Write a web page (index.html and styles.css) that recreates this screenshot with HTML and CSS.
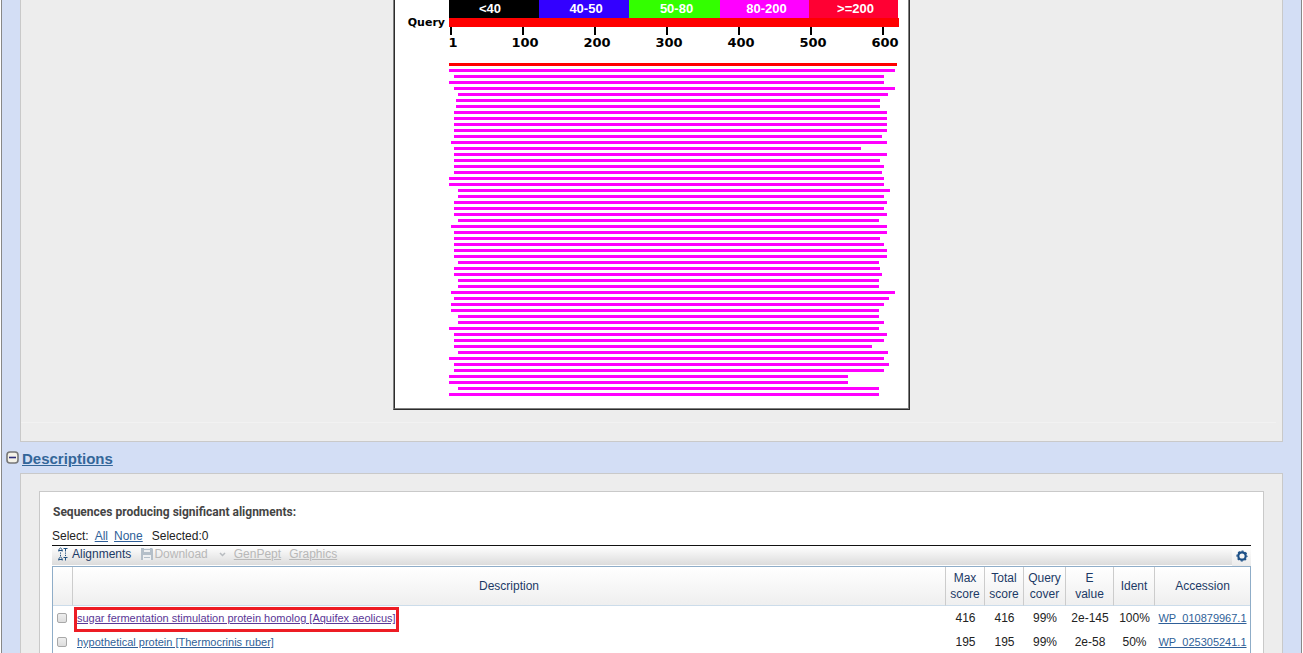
FILE: index.html
```
<!DOCTYPE html>
<html lang="en">
<head>
<meta charset="utf-8">
<title>BLAST results</title>
<link rel="stylesheet" href="styles.css">
</head>
<body>
<main class="page">
  <section class="panel graphic-panel">
    <div class="overview">
      <div class="legend">
        <span class="score black">&lt;40</span>
        <span class="score blue">40-50</span>
        <span class="score green">50-80</span>
        <span class="score pink">80-200</span>
        <span class="score red">&gt;=200</span>
      </div>
      <div class="query-label">Query</div>
      <div class="query-bar"></div>
      <div class="scale">
        <span>1</span><span>100</span><span>200</span><span>300</span><span>400</span><span>500</span><span>600</span>
      </div>
      <svg class="hits" width="450" height="333" viewBox="0 0 450 333" role="img" aria-label="Alignment hits">
        <path fill="#f00" d="M0 0H448v3H0z"/>
        <path fill="#f0f" d="M0 6H446v3H0zM5 12H435v3H5zM0 18H435v3H0zM5 24H446v3H5zM9 30H439v3H9zM7 36H431v3H7zM7 42H431v3H7zM5 48H438v3H5zM5 54H438v3H5zM5 60H438v3H5zM5 66H438v3H5zM5 72H433v3H5zM2 78H438v3H2zM5 84H412v3H5zM5 90H438v3H5zM5 96H431v3H5zM5 102H435v3H5zM5 108H433v3H5zM0 114H435v3H0zM0 120H435v3H0zM9 126H441v3H9zM9 132H435v3H9zM5 138H438v3H5zM5 144H435v3H5zM5 150H438v3H5zM9 156H430v3H9zM2 162H438v3H2zM5 168H438v3H5zM5 174H431v3H5zM5 180H435v3H5zM5 186H438v3H5zM5 192H438v3H5zM9 198H430v3H9zM5 204H431v3H5zM5 210H433v3H5zM9 216H430v3H9zM9 222H430v3H9zM2 228H446v3H2zM5 234H440v3H5zM2 240H435v3H2zM2 246H430v3H2zM9 252H430v3H9zM9 258H435v3H9zM0 264H430v3H0zM5 270H438v3H5zM5 276H435v3H5zM5 282H423v3H5zM9 288H439v3H9zM0 294H435v3H0zM5 300H440v3H5zM5 306H435v3H5zM0 312H399v3H0zM0 318H399v3H0zM9 324H430v3H9zM0 330H430v3H0z"/>
      </svg>
    </div>
    <hr class="divider">
  </section>

  <h2 class="section-title">
    <svg width="13" height="13" viewBox="0 0 13 13" aria-hidden="true">
      <rect x="1" y="1" width="11" height="11" rx="3" fill="#f4f2e8" stroke="#777" stroke-width="1.6"/>
      <path d="M3 6.5h7" stroke="#2d2d7c" stroke-width="1.6"/>
    </svg>
    <a href="#descriptions">Descriptions</a>
  </h2>

  <section class="panel descriptions-panel" id="descriptions">
    <div class="card">
      <h3 class="card-title">Sequences producing significant alignments:</h3>
      <div class="select-row">
        <span>Select:</span>
        <a href="#all">All</a>
        <a href="#none">None</a>
        <span class="count">Selected:0</span>
      </div>
      <div class="toolbar">
        <button class="tool" type="button">
          <svg width="10" height="14" viewBox="0 0 10 14" fill="none" stroke="#205080" aria-hidden="true">
            <path d="M.8 4.500V2.500L2.500 1l1.700 1.500v2M.8 3.500h3.400M5.500 1.500h4M7.500 1v3.500M.8 13.500v-2L2.500 10l1.700 1.500v2M.8 12.500h3.400M5.500 10.500h4M7.500 10v3.500M2.500 5.500v1.200M2.500 7.800V9M7.500 5.500v1.200M7.500 7.800V9"/>
          </svg>
          Alignments
        </button>
        <button class="tool download" type="button" disabled>
          <svg width="12" height="12" viewBox="0 0 12 12" aria-hidden="true">
            <path d="M0 0h11l1 1v11H0z" fill="#b4bfc9"/>
            <path d="M3 0h6v4H3zM2 7h8v5H2z" fill="#eef0f2"/>
            <path d="M3 1.500h6M3 9.500h6" stroke="#b4bfc9"/>
          </svg>
          Download
          <svg class="caret" width="7" height="5" viewBox="0 0 7 5" aria-hidden="true"><path d="M1 1l2.500 2.500L6 1" fill="none" stroke="#b8bcc0" stroke-width="1.500"/></svg>
        </button>
        <a class="off" href="#genpept">GenPept</a>
        <a class="off" href="#graphics">Graphics</a>
        <button class="gear" type="button" aria-label="Settings">
          <svg width="12" height="12" viewBox="0 0 12 12" aria-hidden="true">
            <circle cx="6" cy="6" r="3.700" fill="none" stroke="#1b4f86" stroke-width="2.200"/>
            <circle cx="6" cy="6" r="5" fill="none" stroke="#1b4f86" stroke-width="1.200" stroke-dasharray="2 1.927" stroke-dashoffset="1"/>
          </svg>
        </button>
      </div>
      <table class="results">
        <colgroup>
          <col class="c-check"><col><col class="c-score"><col class="c-score"><col class="c-cover"><col class="c-value"><col class="c-ident"><col class="c-acc">
        </colgroup>
        <thead>
          <tr>
            <th></th><th>Description</th><th>Max<br>score</th><th>Total<br>score</th><th>Query<br>cover</th><th>E<br>value</th><th>Ident</th><th>Accession</th>
          </tr>
        </thead>
        <tbody>
          <tr>
            <td><input type="checkbox" aria-label="Select WP_010879967.1"></td>
            <td class="desc"><a class="marked visited" href="#hit1">sugar fermentation stimulation protein homolog [Aquifex aeolicus]</a></td>
            <td>416</td><td>416</td><td>99%</td><td>2e-145</td><td>100%</td>
            <td><a href="#WP_010879967">WP_010879967.1</a></td>
          </tr>
          <tr>
            <td><input type="checkbox" aria-label="Select WP_025305241.1"></td>
            <td class="desc"><a href="#hit2">hypothetical protein [Thermocrinis ruber]</a></td>
            <td>195</td><td>195</td><td>99%</td><td>2e-58</td><td>50%</td>
            <td><a href="#WP_025305241">WP_025305241.1</a></td>
          </tr>
        </tbody>
      </table>
    </div>
  </section>
</main>
</body>
</html>
```
FILE: styles.css
```
* { box-sizing: border-box; }

body {
  margin: 0;
  padding: 0 1px;
  background: #fff;
  color: #222;
  font: 12px/16px "Liberation Sans", Arial, sans-serif;
}

a { color: #2f5f98; }

button {
  margin: 0;
  padding: 0;
  border: 0;
  background: none;
  font: inherit;
}

.page {
  height: 100vh;
  overflow: hidden;
  background: #d3def5;
  border: solid #888;
  border-width: 0 1px;
}

.panel {
  margin: 0 18px;
  background: #ededed;
  border: 1px solid #c9c9c9;
}

.graphic-panel { border-top: 0; padding-bottom: 18px; }

.overview {
  display: grid;
  grid-template-columns: 54px 450px;
  width: max-content;
  margin: 0 auto;
  padding: 0 9px 12px 0;
  background: #fff;
  border: 2px ridge #808080;
  border-top: 0;
}

.legend {
  grid-column: 2;
  display: grid;
  grid-template-columns: 90px 90px 91px 89px 89px;
  height: 18px;
}

.score {
  color: #fff;
  font-size: 13px;
  font-weight: bold;
  line-height: 18px;
  text-align: center;
}

.black { background: #000; padding-right: 8px; }
.blue { background: #30f; padding-left: 4px; }
.green { background: #3f0; padding-left: 4px; }
.pink { background: #f0f; padding-left: 4px; }
.red { background: #f03; padding-left: 4px; }

.query-label {
  padding-right: 4px;
  color: #000;
  font: bold 11px/9px "DejaVu Sans", sans-serif;
  text-align: right;
}

.query-bar { height: 9px; background: #f00; }

.scale {
  grid-column: 2;
  display: grid;
  grid-template-columns: repeat(7, 72px);
  width: 450px;
  height: 36px;
  margin-left: 1px;
}

.scale span {
  width: 34px;
  margin-left: -14px;
  color: #000;
  font: bold 13px/15px "DejaVu Sans", sans-serif;
  text-align: center;
}

.scale span::before {
  content: "";
  display: block;
  width: 2px;
  height: 8px;
  margin-left: 14px;
  background: #000;
}

.hits { grid-column: 2; display: block; }

.divider {
  height: 1px;
  margin: 12px 6px 0 0;
  border: 0;
  background: #f2f2f2;
}

.section-title {
  display: flex;
  align-items: center;
  gap: 3px;
  height: 31px;
  margin: 0;
  padding-left: 4px;
  font-size: 15px;
  line-height: 18px;
}

.section-title a { margin-top: 3px; color: #336699; }

.descriptions-panel { padding: 17px 18px 40px; }

.card {
  padding: 12px 12px 30px;
  background: #fff;
  border: 1px solid #c9c9c9;
}

.card-title {
  margin: 0 0 8px 1px;
  color: #444;
  font: bold 12px/16px Roboto, sans-serif;
}

.select-row { display: flex; gap: 6px; height: 17px; }
.count { margin-left: 3px; }

.toolbar {
  display: flex;
  align-items: flex-start;
  height: 20px;
  margin-bottom: 1px;
  border-top: 1px solid #111;
  background: linear-gradient(#fff, #dcdcdc);
}

.tool {
  display: flex;
  align-items: center;
  gap: 4px;
  height: 16px;
  padding-left: 6px;
  color: #1c3a66;
  line-height: 16px;
}

.tool.download { gap: 1px; padding-left: 10px; color: #b8b8b8; }
.caret { margin-left: 10px; }
.off { margin-left: 8px; color: #b8b8b8; }

.gear {
  display: grid;
  place-items: center;
  width: 19px;
  height: 20px;
  margin-left: auto;
  background: linear-gradient(#fff, #ebebeb);
}

.results {
  width: 100%;
  table-layout: fixed;
  border-collapse: separate;
  border-spacing: 0;
  border: 1px solid #8fadc8;
  border-bottom: 0;
}

.c-check { width: 20px; }
.c-score { width: 39px; }
.c-cover { width: 42px; }
.c-value { width: 48px; }
.c-ident { width: 41px; }
.c-acc { width: 95px; }

.results th {
  height: 39px;
  padding: 2px 0;
  border-right: 1px solid #ccc;
  border-bottom: 1px solid #ccdcea;
  background: linear-gradient(#fff, #efefef);
  color: #1c3a66;
  font-weight: normal;
  text-align: center;
}

.results th:last-child { border-right: 0; }

.results td {
  height: 24px;
  padding: 0;
  text-align: center;
  white-space: nowrap;
}

.results td a { font-size: 11px; }
.results .desc { padding-left: 4px; text-align: left; }
.results .visited { color: #5a3696; }

.marked {
  display: inline-block;
  margin-bottom: -3px;
  padding-bottom: 3px;
  outline: 3px solid #ed1c24;
}

.results input {
  appearance: none;
  display: block;
  width: 10px;
  height: 10px;
  margin: 0 auto 1px 4px;
  border: 1px solid #a8a8a8;
  border-radius: 2px;
  background: linear-gradient(#eee, #ddd);
}
```
